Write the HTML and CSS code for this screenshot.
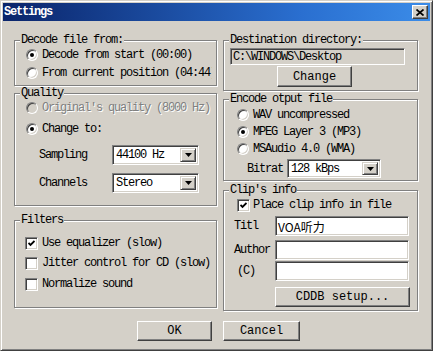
FILE: index.html
```html
<!DOCTYPE html>
<html lang="en">

<head>
    <meta charset="UTF-8" />
    <title>Settings</title>
    <link rel="stylesheet" href="styles.css">
</head>

<body>
    <div class="window">
        <!-- Title bar -->
        <div class="titlebar">
            <span class="title">Settings</span>
            <span class="close">
                <svg width="8" height="7" viewBox="0 0 8 7"><path d="M0.5 0.5 L7.5 6.5 M7.5 0.5 L0.5 6.5" stroke="#000" stroke-width="1.7" fill="none" /></svg>
            </span>
        </div>

        <div class="panes">
            <!-- Left column -->
            <div class="col col-left">
                <fieldset class="group">
                    <legend>Decode file from:</legend>
                    <div class="inner decode">
                        <div class="opt"><span class="radio on"></span>Decode from start (00:00)</div>
                        <div class="opt"><span class="radio"></span>From current position (04:44)</div>
                    </div>
                </fieldset>

                <fieldset class="group quality-box">
                    <legend>Quality</legend>
                    <div class="inner quality">
                        <div class="opt disabled"><span class="radio off"></span>Original's quality (8000 Hz)</div>
                        <div class="opt change"><span class="radio on"></span>Change to:</div>
                        <div class="field sampling">
                            <span class="field-label">Sampling</span>
                            <div class="select"><span class="select-text">44100 Hz</span><span class="drop"><svg width="7" height="4" viewBox="0 0 7 4"><path d="M0 0 H7 L3.5 4 Z" /></svg></span></div>
                        </div>
                        <div class="field channels">
                            <span class="field-label">Channels</span>
                            <div class="select"><span class="select-text">Stereo</span><span class="drop"><svg width="7" height="4" viewBox="0 0 7 4"><path d="M0 0 H7 L3.5 4 Z" /></svg></span></div>
                        </div>
                    </div>
                </fieldset>

                <fieldset class="group filters-box">
                    <legend>Filters</legend>
                    <div class="inner filters">
                        <div class="opt"><span class="check on"><svg width="7" height="7" viewBox="0 0 7 7"><path d="M0.5 3 L2.5 5 L6.5 1" stroke="#000" stroke-width="1.8" fill="none" /></svg></span>Use equalizer (slow)</div>
                        <div class="opt"><span class="check"></span>Jitter control for CD (slow)</div>
                        <div class="opt last"><span class="check"></span>Normalize sound</div>
                    </div>
                </fieldset>
            </div>

            <!-- Right column -->
            <div class="col col-right">
                <fieldset class="group">
                    <legend>Destination directory:</legend>
                    <div class="inner dest">
                        <div class="textbox readonly">C:\WINDOWS\Desktop</div>
                        <button class="btn change-btn">Change</button>
                    </div>
                </fieldset>

                <fieldset class="group encode-box">
                    <legend>Encode otput file</legend>
                    <div class="inner encode">
                        <div class="opt"><span class="radio"></span>WAV uncompressed</div>
                        <div class="opt"><span class="radio on"></span>MPEG Layer 3 (MP3)</div>
                        <div class="opt"><span class="radio"></span>MSAudio 4.0 (WMA)</div>
                        <div class="field bitrate">
                            <span class="field-label">Bitrat</span>
                            <div class="select"><span class="select-text">128 kBps</span><span class="drop"><svg width="7" height="4" viewBox="0 0 7 4"><path d="M0 0 H7 L3.5 4 Z" /></svg></span></div>
                        </div>
                    </div>
                </fieldset>

                <fieldset class="group clip-box">
                    <legend>Clip's info</legend>
                    <div class="inner clip">
                        <div class="opt"><span class="check on"><svg width="7" height="7" viewBox="0 0 7 7"><path d="M0.5 3 L2.5 5 L6.5 1" stroke="#000" stroke-width="1.8" fill="none" /></svg></span>Place clip info in file</div>
                        <div class="field info title-row">
                            <span class="field-label">Titl</span>
                            <div class="textbox"><span class="cjk">VOA听力</span></div>
                        </div>
                        <div class="field info author-row">
                            <span class="field-label">Author</span>
                            <div class="textbox"></div>
                        </div>
                        <div class="field info copy-row">
                            <span class="field-label copy">(C)</span>
                            <div class="textbox"></div>
                        </div>
                        <button class="btn cddb">CDDB setup...</button>
                    </div>
                </fieldset>
            </div>
        </div>

        <!-- Dialog buttons -->
        <div class="actions">
            <button class="btn ok">OK</button>
            <button class="btn cancel">Cancel</button>
        </div>
    </div>
</body>

</html>
```

FILE: styles.css
```css
* {
    box-sizing: border-box;
}

body {
    margin: 0;
    background: #fff;
    font-family: "Liberation Mono", "Noto Sans CJK SC", monospace;
    font-size: 12px;
    letter-spacing: -1.2px;
    color: #000;
}

.window {
    width: 433px;
    height: 351px;
    background: #d4d0c8;
    border: 1px solid;
    border-color: #d4d0c8 #404040 #404040 #d4d0c8;
    box-shadow: inset 1px 1px 0 #fff, inset -1px -1px 0 #808080;
    padding: 2px;
}

/* title bar */
.titlebar {
    height: 18px;
    display: flex;
    align-items: center;
    justify-content: space-between;
    padding: 0 2px 0 1px;
    background: linear-gradient(to right, #0a246a, #2a6fd0 70%, #3b8ce8);
    color: #fff;
    font-weight: bold;
}

.close {
    width: 16px;
    height: 14px;
    display: flex;
    align-items: center;
    justify-content: center;
    background: #d4d0c8;
    border: 1px solid;
    border-color: #fff #404040 #404040 #fff;
    box-shadow: inset -1px -1px 0 #808080;
}

/* columns */
.panes {
    display: flex;
    gap: 6px;
    padding: 13px 0 0 11px;
}

.col {
    display: flex;
    flex-direction: column;
}

.col-left {
    width: 203px;
}

.col-right {
    width: 195px;
}

/* group boxes */
.group {
    margin: 0;
    padding: 0;
    min-width: 0;
    border: 1px solid #808080;
    box-shadow: 1px 1px 0 #fff, inset 1px 1px 0 #fff;
}

.group legend {
    margin-left: 5px;
    padding: 0 1px;
    line-height: 12px;
    background: #d4d0c8;
}

.quality-box {
    margin-top: 1px;
}

.filters-box {
    margin-top: 8px;
}

.encode-box {
    margin-top: 2px;
}

.clip-box {
    margin-top: 3px;
}

.decode {
    padding: 0 4px 3px 11px;
}

.quality {
    padding: 0 4px 12px 11px;
}

.filters {
    padding: 7px 4px 13px 10px;
}

.dest {
    padding: 1px 0 3px 6px;
}

.encode {
    padding: 1px 0 2px 13px;
}

.clip {
    padding: 0 0 3px 10px;
}

/* options */
.opt {
    display: flex;
    align-items: center;
    height: 18px;
    white-space: nowrap;
    overflow: hidden;
}

.change {
    margin-top: 3px;
}

.filters .opt {
    height: 20px;
}

.filters .last {
    margin-top: 1px;
}

.encode .opt {
    height: 17px;
}

.clip .opt {
    padding-left: 3px;
}

.disabled {
    color: #808080;
    text-shadow: 1px 1px 0 #fff;
}

.radio {
    flex: none;
    position: relative;
    width: 12px;
    height: 12px;
    margin-right: 4px;
    border-radius: 50%;
    background: #fff;
    border: 1px solid;
    border-color: #808080 #fff #fff #808080;
    box-shadow: inset 1px 1px 0 #404040, inset -1px -1px 0 #d4d0c8;
}

.radio.off {
    background: #d4d0c8;
}

.radio.on::after {
    content: "";
    position: absolute;
    left: 3px;
    top: 3px;
    width: 4px;
    height: 4px;
    border-radius: 50%;
    background: #000;
}

.check {
    flex: none;
    display: flex;
    align-items: center;
    justify-content: center;
    width: 13px;
    height: 13px;
    margin-right: 4px;
    background: #fff;
    border: 1px solid;
    border-color: #808080 #fff #fff #808080;
    box-shadow: inset 1px 1px 0 #404040, inset -1px -1px 0 #d4d0c8;
}

.clip .check {
    margin-right: 3px;
}

/* labelled fields */
.field {
    display: flex;
    align-items: center;
}

.field-label {
    white-space: nowrap;
}

.quality .field-label {
    width: 73px;
    padding-left: 13px;
    box-sizing: content-box;
}

.sampling {
    margin-top: 7px;
}

.channels {
    margin-top: 8px;
}

.bitrate {
    margin-top: 2px;
}

.bitrate .field-label {
    width: 40px;
    padding-left: 10px;
    box-sizing: content-box;
}

.select {
    display: flex;
    align-items: center;
    justify-content: space-between;
    width: 87px;
    height: 20px;
    padding: 2px;
    background: #fff;
    border: 1px solid;
    border-color: #808080 #fff #fff #808080;
    box-shadow: inset 1px 1px 0 #404040, inset -1px -1px 0 #d4d0c8;
}

.bitrate .select {
    width: 94px;
    height: 19px;
}

.select-text {
    padding-left: 1px;
}

.drop {
    width: 16px;
    height: 100%;
    display: flex;
    align-items: center;
    justify-content: center;
    background: #d4d0c8;
    border: 1px solid;
    border-color: #d4d0c8 #404040 #404040 #d4d0c8;
    box-shadow: inset 1px 1px 0 #fff, inset -1px -1px 0 #808080;
}

.textbox {
    height: 20px;
    display: flex;
    align-items: center;
    padding: 0 2px;
    background: #fff;
    border: 1px solid;
    border-color: #808080 #fff #fff #808080;
    box-shadow: inset 1px 1px 0 #404040, inset -1px -1px 0 #d4d0c8;
    white-space: nowrap;
}

.readonly {
    width: 175px;
    height: 17px;
    margin-top: 1px;
    background: #d4d0c8;
}

.info .field-label {
    width: 41px;
}

.info .textbox {
    width: 134px;
}

.title-row {
    margin-top: 2px;
}

.author-row {
    margin-top: 4px;
}

.copy-row {
    margin-top: 1px;
}

.copy {
    padding-left: 3px;
}

.cjk {
    font-family: "Noto Sans CJK SC", sans-serif;
    letter-spacing: 0;
    font-size: 12px;
}

/* push buttons */
.btn {
    font: inherit;
    color: #000;
    background: #d4d0c8;
    border: 1px solid;
    border-color: #fff #404040 #404040 #fff;
    box-shadow: inset -1px -1px 0 #808080;
    padding: 0;
}

.change-btn {
    width: 75px;
    height: 21px;
    margin: 1px 0 0 47px;
}

.cddb {
    width: 135px;
    height: 20px;
    margin: 6px 0 0 41px;
}

.actions {
    display: flex;
    gap: 11px;
    padding: 10px 0 0 134px;
}

.ok {
    width: 75px;
    height: 20px;
}

.cancel {
    width: 77px;
    height: 20px;
}
```
